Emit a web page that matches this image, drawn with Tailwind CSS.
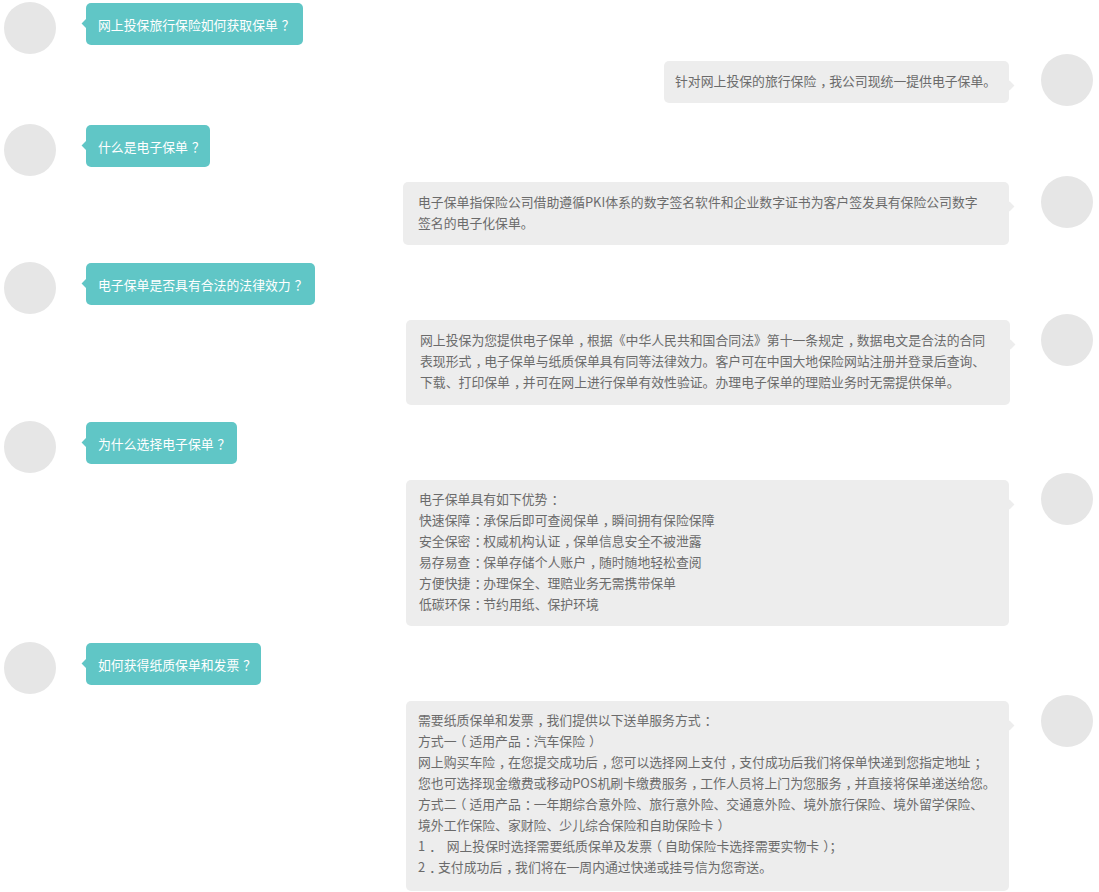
<!DOCTYPE html>
<html lang="zh-CN">
<head>
<meta charset="utf-8">
<title>电子保单常见问题</title>
<script src="https://cdn.jsdelivr.net/npm/@tailwindcss/browser@4"></script>
</head>
<body class="bg-white font-['Noto_Sans_CJK_SC',sans-serif] text-[12.85px] leading-[21px] overflow-hidden">
<div class="h-[892px] pt-[2px] overflow-hidden">

  <!-- Q1 -->
  <div class="flex pl-[4px] h-[52px]">
    <div class="size-[52px] rounded-full bg-[#e6e6e6] shrink-0"></div>
    <div class="relative ml-[30px] mt-[1px] h-[42px] w-[217px] pl-[12px] pt-[11px] rounded-[5px] bg-[#60c6c6] text-white">
      <span class="absolute left-[-3px] top-[17px] size-[7px] rotate-45 bg-[#60c6c6]"></span><p class="punct">网上投保旅行保险如何获取保单？</p>
    </div>
  </div>

  <!-- A1 -->
  <div class="flex justify-end pr-[6px] h-[70px]">
    <div class="relative mt-[7px] h-[42px] w-[345px] pl-[11px] pt-[9px] rounded-[5px] bg-[#ededed] text-[#6b6b6b]">
      <span class="absolute right-[-4px] top-[21px] size-[7px] rotate-45 bg-[#ededed]"></span><p class="punct">针对网上投保的旅行保险，我公司现统一提供电子保单。</p>
    </div>
    <div class="size-[52px] rounded-full bg-[#e6e6e6] shrink-0 ml-[32px]"></div>
  </div>

  <!-- Q2 -->
  <div class="flex pl-[4px] h-[52px]">
    <div class="size-[52px] rounded-full bg-[#e6e6e6] shrink-0"></div>
    <div class="relative ml-[30px] mt-[1px] h-[42px] w-[124px] pl-[12px] pt-[11px] rounded-[5px] bg-[#60c6c6] text-white">
      <span class="absolute left-[-3px] top-[17px] size-[7px] rotate-45 bg-[#60c6c6]"></span><p class="punct">什么是电子保单？</p>
    </div>
  </div>

  <!-- A2 -->
  <div class="flex justify-end pr-[6px] h-[86px]">
    <div class="relative mt-[6px] h-[63px] w-[606px] pl-[15px] pt-[9px] rounded-[5px] bg-[#ededed] text-[#6b6b6b]">
      <span class="absolute right-[-4px] top-[21px] size-[7px] rotate-45 bg-[#ededed]"></span><p class="punct">电子保单指保险公司借助遵循PKI体系的数字签名软件和企业数字证书为客户签发具有保险公司数字<br>签名的电子化保单。</p>
    </div>
    <div class="size-[52px] rounded-full bg-[#e6e6e6] shrink-0 ml-[32px]"></div>
  </div>

  <!-- Q3 -->
  <div class="flex pl-[4px] h-[52px]">
    <div class="size-[52px] rounded-full bg-[#e6e6e6] shrink-0"></div>
    <div class="relative ml-[30px] mt-[1px] h-[42px] w-[229px] pl-[12px] pt-[11px] rounded-[5px] bg-[#60c6c6] text-white">
      <span class="absolute left-[-3px] top-[17px] size-[7px] rotate-45 bg-[#60c6c6]"></span><p class="punct">电子保单是否具有合法的法律效力？</p>
    </div>
  </div>

  <!-- A3 -->
  <div class="flex justify-end pr-[6px] h-[107px]">
    <div class="relative mt-[6px] h-[85px] w-[604px] pl-[14px] pt-[9px] rounded-[5px] bg-[#ededed] text-[#6b6b6b]">
      <span class="absolute right-[-4px] top-[21px] size-[7px] rotate-45 bg-[#ededed]"></span><p class="punct">网上投保为您提供电子保单，根据《中华人民共和国合同法》第十一条规定，数据电文是合法的合同<br>表现形式，电子保单与纸质保单具有同等法律效力。客户可在中国大地保险网站注册并登录后查询、<br>下载、打印保单，并可在网上进行保单有效性验证。办理电子保单的理赔业务时无需提供保单。</p>
    </div>
    <div class="size-[52px] rounded-full bg-[#e6e6e6] shrink-0 ml-[31px]"></div>
  </div>

  <!-- Q4 -->
  <div class="flex pl-[4px] h-[52px]">
    <div class="size-[52px] rounded-full bg-[#e6e6e6] shrink-0"></div>
    <div class="relative ml-[30px] mt-[1px] h-[42px] w-[151px] pl-[12px] pt-[11px] rounded-[5px] bg-[#60c6c6] text-white">
      <span class="absolute left-[-3px] top-[17px] size-[7px] rotate-45 bg-[#60c6c6]"></span><p class="punct">为什么选择电子保单？</p>
    </div>
  </div>

  <!-- A4 -->
  <div class="flex justify-end pr-[6px] h-[169px]">
    <div class="relative mt-[7px] h-[146px] w-[603px] pl-[13px] pt-[8px] rounded-[5px] bg-[#ededed] text-[#6b6b6b]">
      <span class="absolute right-[-4px] top-[21px] size-[7px] rotate-45 bg-[#ededed]"></span><p class="punct">电子保单具有如下优势：<br>快速保障：承保后即可查阅保单，瞬间拥有保险保障<br>安全保密：权威机构认证，保单信息安全不被泄露<br>易存易查：保单存储个人账户，随时随地轻松查阅<br>方便快捷：办理保全、理赔业务无需携带保单<br>低碳环保：节约用纸、保护环境</p>
    </div>
    <div class="size-[52px] rounded-full bg-[#e6e6e6] shrink-0 ml-[32px]"></div>
  </div>

  <!-- Q5 -->
  <div class="flex pl-[4px] h-[53px]">
    <div class="size-[52px] rounded-full bg-[#e6e6e6] shrink-0"></div>
    <div class="relative ml-[30px] mt-[1px] h-[42px] w-[175px] pl-[12px] pt-[11px] rounded-[5px] bg-[#60c6c6] text-white">
      <span class="absolute left-[-3px] top-[17px] size-[7px] rotate-45 bg-[#60c6c6]"></span><p class="punct">如何获得纸质保单和发票？</p>
    </div>
  </div>

  <!-- A5 -->
  <div class="flex justify-end pr-[6px]">
    <div class="relative mt-[6px] h-[190px] w-[603px] pl-[12px] pt-[8px] rounded-[5px] bg-[#ededed] text-[#6b6b6b]">
      <span class="absolute right-[-4px] top-[21px] size-[7px] rotate-45 bg-[#ededed]"></span><p class="punct">需要纸质保单和发票，我们提供以下送单服务方式：<br>方式一（适用产品：汽车保险）<br>网上购买车险，在您提交成功后，您可以选择网上支付，支付成功后我们将保单快递到您指定地址；<br>您也可选择现金缴费或移动POS机刷卡缴费服务，工作人员将上门为您服务，并直接将保单递送给您。<br>方式二（适用产品：一年期综合意外险、旅行意外险、交通意外险、境外旅行保险、境外留学保险、<br>境外工作保险、家财险、少儿综合保险和自助保险卡）<br>1．&nbsp;&nbsp; 网上投保时选择需要纸质保单及发票（自助保险卡选择需要实物卡）；<br>2．支付成功后，我们将在一周内通过快递或挂号信为您寄送。</p>
    </div>
    <div class="size-[52px] rounded-full bg-[#e6e6e6] shrink-0 ml-[32px]"></div>
  </div>

</div>
<script>
  // 标点在原图里居中，Noto 的简中字形靠一边，用内边距和字距挪一下，总宽不变
  document.querySelectorAll('.punct').forEach(p => {
    p.innerHTML = p.innerHTML
      .replace(/[，：？；．）]/g, c => '<span class="pl-[4px] tracking-[-4px]">' + c + '</span>')
      .replace(/(.)（/g, (m, prev) => '<span class="tracking-[-3px]">' + prev + '</span><span class="tracking-[3px]">（</span>');
  });
</script>
</body>
</html>
